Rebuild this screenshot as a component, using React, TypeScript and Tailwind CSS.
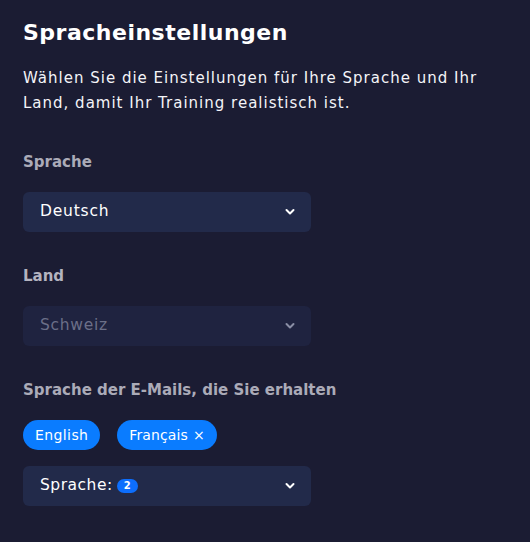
import React from "react";

function Chevron({ className }: { className?: string }) {
  return (
    <svg width="10" height="8" viewBox="0 0 10 8" className={className}>
      <path d="M1.5 2 L5 5.5 L8.5 2" fill="none" stroke="currentColor" strokeWidth="2" strokeLinecap="round" strokeLinejoin="round" />
    </svg>
  );
}

export default function App() {
  return (
    <div
      className="w-[530px] h-[542px] bg-[#1b1c33] text-white px-[23px] pt-[18px]"
      style={{ fontFamily: '"DejaVu Sans", "Noto Sans", sans-serif' }}
    >
      <h1 className="text-[22px] font-bold leading-[30px] tracking-[0.5px]">Spracheinstellungen</h1>
      <p className="mt-[18px] text-[15px] leading-[25px] tracking-[1px] text-[#f4f4f8]">
        Wählen Sie die Einstellungen für Ihre Sprache und Ihr
        <br />
        Land, damit Ihr Training realistisch ist.
      </p>

      <div className="mt-[36px] text-[15px] font-bold text-[#ababb8] leading-[20px]">Sprache</div>
      <div className="mt-[20px] w-[288px] h-[40px] rounded-[6px] bg-[#222a4a] flex items-center justify-between pl-[17px] pr-[16px]">
        <span className="text-[15.5px] text-white tracking-[0.8px]">Deutsch</span>
        <Chevron className="text-white" />
      </div>

      <div className="mt-[34px] text-[15px] font-bold text-[#b4b4c0] leading-[20px]">Land</div>
      <div className="mt-[20px] w-[288px] h-[40px] rounded-[6px] bg-[#1f2340] flex items-center justify-between pl-[17px] pr-[16px]">
        <span className="text-[15.5px] text-[#6b6f88] tracking-[0.7px]">Schweiz</span>
        <Chevron className="text-[#8a8ea5]" />
      </div>

      <div className="mt-[34px] text-[15px] font-bold text-[#ababb8] leading-[20px]">Sprache der E-Mails, die Sie erhalten</div>
      <div className="mt-[20px] flex gap-[17px]">
        <span className="h-[30px] px-[12px] rounded-full bg-[#0a7cff] text-[14px] tracking-[0.4px] flex items-center">English</span>
        <span className="h-[30px] px-[12px] rounded-full bg-[#0a7cff] text-[14px] tracking-[0.1px] flex items-center gap-[5px]">
          Français <span className="text-[14px]">×</span>
        </span>
      </div>
      <div className="mt-[16px] w-[288px] h-[40px] rounded-[6px] bg-[#222a4a] flex items-center justify-between pl-[17px] pr-[16px]">
        <span className="flex items-center gap-[4px]">
          <span className="text-[15.5px] text-white tracking-[0.5px]">Sprache:</span>
          <span className="h-[14px] px-[7px] rounded-full bg-[#0d6efd] text-[10px] font-bold leading-[14px]">2</span>
        </span>
        <Chevron className="text-white" />
      </div>
    </div>
  );
}
